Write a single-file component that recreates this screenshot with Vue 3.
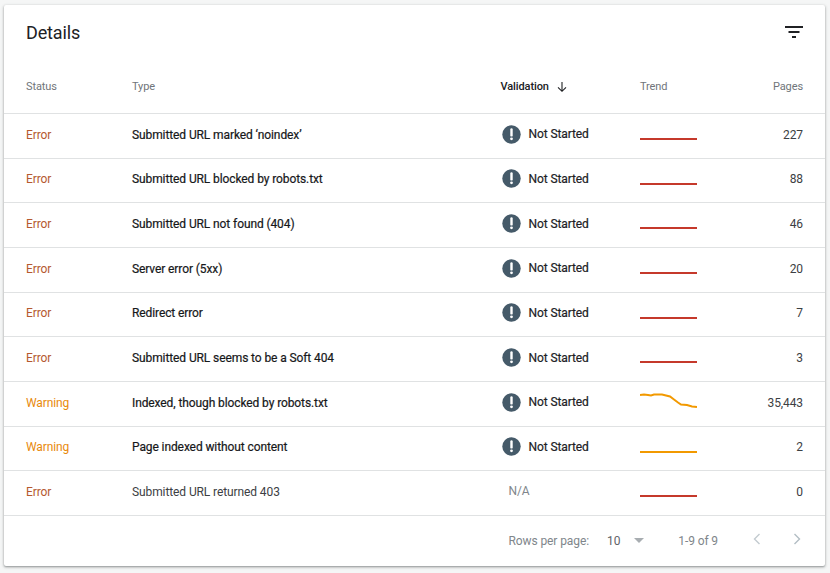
<script setup>
const rows = [
  { status: 'Error', type: 'Submitted URL marked ‘noindex’', val: true, pages: '227' },
  { status: 'Error', type: 'Submitted URL blocked by robots.txt', val: true, pages: '88' },
  { status: 'Error', type: 'Submitted URL not found (404)', val: true, pages: '46' },
  { status: 'Error', type: 'Server error (5xx)', val: true, pages: '20' },
  { status: 'Error', type: 'Redirect error', val: true, pages: '7' },
  { status: 'Error', type: 'Submitted URL seems to be a Soft 404', val: true, pages: '3' },
  { status: 'Warning', type: 'Indexed, though blocked by robots.txt', val: true, pages: '35,443', trend: 'M0 6 L4 5.5 L8 6 L11 6.5 L14 5.5 L22 5.5 L26 6.5 L30 7.5 L34 10.5 L38 13.5 L41 15.5 L47 16 L52 17.5 L57 18' },
  { status: 'Warning', type: 'Page indexed without content', val: true, pages: '2' },
  { status: 'Error', type: 'Submitted URL returned 403', val: false, pages: '0', plain: true }
]
</script>

<template>
  <main class="page">
    <section class="card">
      <header class="head">
        <h2>Details</h2>
        <svg class="filter" width="24" height="24" viewBox="0 0 24 24"><path d="M3 6h18v2H3zM6.5 11h11v2h-11zM10 16h4v2h-4z" fill="#202124" /></svg>
      </header>
      <div class="row th">
        <span>Status</span>
        <span>Type</span>
        <span class="sorted">Validation
          <svg width="12" height="12" viewBox="0 0 12 12"><path d="M6 1v9.2M2 6.3l4 4 4-4" fill="none" stroke="#202124" stroke-width="1.1" /></svg>
        </span>
        <span>Trend</span>
        <span class="num">Pages</span>
      </div>
      <div v-for="r in rows" :key="r.type" class="row td">
        <span :class="r.status === 'Error' ? 'err' : 'warn'">{{ r.status }}</span>
        <span :class="r.plain ? 'plain' : 'name'">{{ r.type }}</span>
        <span v-if="r.val" class="val">
          <svg width="19" height="19" viewBox="0 0 19 19"><circle cx="9.5" cy="9.5" r="9.2" fill="#455a69" /><path d="M9.5 4.4v6" stroke="#fff" stroke-width="2.4" stroke-linecap="round" /><circle cx="9.5" cy="13.8" r="1.4" fill="#fff" /></svg>
          Not Started
        </span>
        <span v-else class="na">N/A</span>
        <svg class="trend" width="57" height="24" viewBox="0 0 57 24">
          <path :d="r.trend || 'M0 18H57'" fill="none" :stroke="r.status === 'Error' ? '#c5392b' : '#f29900'" stroke-width="2" />
        </svg>
        <span class="num pages">{{ r.pages }}</span>
      </div>
      <footer class="foot">
        <span>Rows per page:</span>
        <span class="size">10</span>
        <i class="caret"></i>
        <span class="range">1-9 of 9</span>
        <svg class="prev" width="24" height="24" viewBox="0 0 24 24"><path d="M14.5 7l-5 5 5 5" fill="none" stroke="#c3cbd0" stroke-width="1.4" /></svg>
        <svg class="next" width="24" height="24" viewBox="0 0 24 24"><path d="M9.5 7l5 5-5 5" fill="none" stroke="#b3bec4" stroke-width="1.4" /></svg>
      </footer>
    </section>
  </main>
</template>

<style scoped>
.page {
  width: 830px;
  height: 573px;
  box-sizing: border-box;
  padding: 5px 5px 0 4px;
  background: #f5f6f6;
  font-family: Roboto, "Liberation Sans", sans-serif;
  overflow: hidden;
}
.card {
  height: 561px;
  background: #fff;
  border-radius: 2px;
  box-shadow: 0 1px 2px rgba(60, 64, 67, 0.45), 0 1px 3px 1px rgba(60, 64, 67, 0.12);
  overflow: hidden;
}
.head {
  height: 64px;
  display: flex;
  align-items: center;
  justify-content: space-between;
  padding: 0 19px 10px 22px;
  box-sizing: border-box;
}
h2 {
  margin: 0;
  font-size: 18px;
  font-weight: 400;
  letter-spacing: -0.15px;
  color: #202124;
}
.row {
  display: grid;
  grid-template-columns: 106px 368.5px 139.5px 1fr auto;
  align-items: center;
  padding: 0 22px;
  box-sizing: border-box;
  border-bottom: 1px solid #e0e2e3;
  font-size: 12px;
  letter-spacing: -0.1px;
}
.th {
  height: 45px;
  padding-bottom: 10px;
  color: #70757a;
  font-size: 11px;
}
.td {
  height: 44.67px;
  padding-bottom: 2px;
  color: #202124;
}
.sorted {
  color: #202124;
  font-weight: 500;
  display: flex;
  align-items: center;
  gap: 7px;
}
.sorted svg { margin-top: 2px; }
.num { text-align: right; }
.pages { color: #3c4043; }
.err { color: #b5592f; }
.warn { color: #e8890c; }
.name { font-weight: 400; color: #17181a; -webkit-text-stroke: 0.2px #17181a; }
.plain { color: #3c4043; }
.val {
  display: flex;
  align-items: center;
  gap: 8px;
  margin-left: 1px;
  margin-top: -1px;
  color: #202124;
  -webkit-text-stroke: 0.2px #202124;
}
.val svg { flex: none; }
.na {
  margin-left: 8px;
  margin-top: -2px;
  color: #80868b;
}
.trend { display: block; margin-top: -3.67px; }
.foot {
  height: 50px;
  display: flex;
  align-items: center;
  justify-content: flex-end;
  padding-right: 16px;
  font-size: 12px;
  letter-spacing: -0.1px;
  color: #80868b;
}
.size {
  margin-left: 18px;
  color: #5f6368;
}
.caret {
  width: 0;
  height: 0;
  margin-left: 14px;
  border-left: 5px solid transparent;
  border-right: 5px solid transparent;
  border-top: 5px solid #a8adb1;
}
.range { margin-left: 34px; }
.prev { margin: -3px 0 0 27px; }
.next { margin: -3px 0 0 16px; }
</style>

<style>
html, body { background: #f5f6f6; }
</style>
